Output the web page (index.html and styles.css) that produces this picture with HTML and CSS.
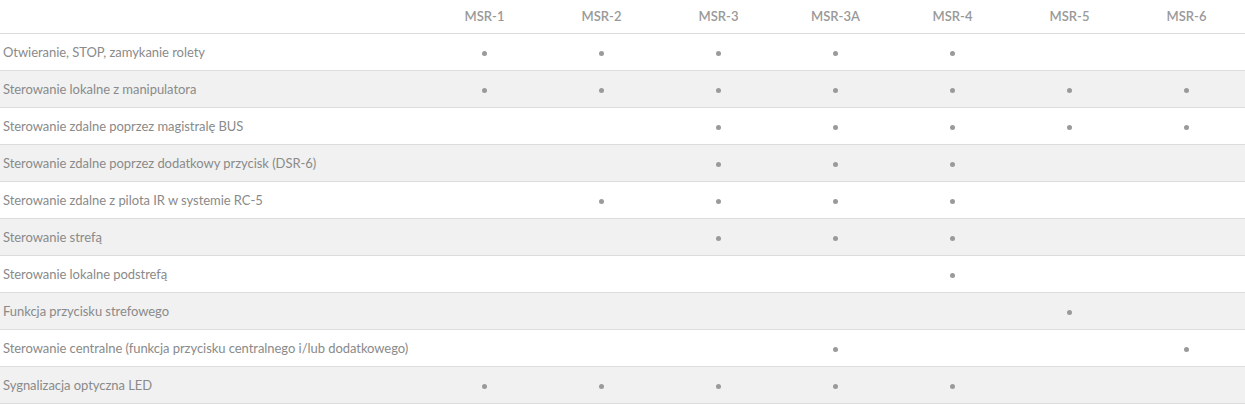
FILE: index.html
```html
<!DOCTYPE html>
<html lang="pl">
<head>
<meta charset="utf-8">
<link rel="stylesheet" href="styles.css">
</head>
<body>
<table class="cmp">
  <colgroup>
    <col class="c-name">
    <col class="c-m"><col class="c-m"><col class="c-m"><col class="c-m"><col class="c-m"><col class="c-m"><col class="c-m">
  </colgroup>
  <thead>
    <tr><th></th><th>MSR-1</th><th>MSR-2</th><th>MSR-3</th><th>MSR-3A</th><th>MSR-4</th><th>MSR-5</th><th>MSR-6</th></tr>
  </thead>
  <tbody>
    <tr><td>Otwieranie, STOP, zamykanie rolety</td><td><i class="dot"></i></td><td><i class="dot"></i></td><td><i class="dot"></i></td><td><i class="dot"></i></td><td><i class="dot"></i></td><td></td><td></td></tr>
    <tr><td>Sterowanie lokalne z manipulatora</td><td><i class="dot"></i></td><td><i class="dot"></i></td><td><i class="dot"></i></td><td><i class="dot"></i></td><td><i class="dot"></i></td><td><i class="dot"></i></td><td><i class="dot"></i></td></tr>
    <tr><td>Sterowanie zdalne poprzez magistralę BUS</td><td></td><td></td><td><i class="dot"></i></td><td><i class="dot"></i></td><td><i class="dot"></i></td><td><i class="dot"></i></td><td><i class="dot"></i></td></tr>
    <tr><td>Sterowanie zdalne poprzez dodatkowy przycisk (DSR-6)</td><td></td><td></td><td><i class="dot"></i></td><td><i class="dot"></i></td><td><i class="dot"></i></td><td></td><td></td></tr>
    <tr><td>Sterowanie zdalne z pilota IR w systemie RC-5</td><td></td><td><i class="dot"></i></td><td><i class="dot"></i></td><td><i class="dot"></i></td><td><i class="dot"></i></td><td></td><td></td></tr>
    <tr><td>Sterowanie strefą</td><td></td><td></td><td><i class="dot"></i></td><td><i class="dot"></i></td><td><i class="dot"></i></td><td></td><td></td></tr>
    <tr><td>Sterowanie lokalne podstrefą</td><td></td><td></td><td></td><td></td><td><i class="dot"></i></td><td></td><td></td></tr>
    <tr><td>Funkcja przycisku strefowego</td><td></td><td></td><td></td><td></td><td></td><td><i class="dot"></i></td><td></td></tr>
    <tr><td>Sterowanie centralne (funkcja przycisku centralnego i/lub dodatkowego)</td><td></td><td></td><td></td><td><i class="dot"></i></td><td></td><td></td><td><i class="dot"></i></td></tr>
    <tr><td>Sygnalizacja optyczna LED</td><td><i class="dot"></i></td><td><i class="dot"></i></td><td><i class="dot"></i></td><td><i class="dot"></i></td><td><i class="dot"></i></td><td></td><td></td></tr>
  </tbody>
</table>
</body>
</html>
```
FILE: styles.css
```css
html, body {
  margin: 0;
  padding: 0;
  background: #fff;
}
body {
  font-family: Lato, "Open Sans", sans-serif;
  font-size: 13px;
  color: #8a8a8a;
}
.cmp {
  width: 1245px;
  border-collapse: collapse;
  table-layout: fixed;
}
.c-name { width: 426px; }
.c-m { width: 117px; }
.cmp th {
  height: 33px;
  padding: 0;
  font-weight: 600;
  font-size: 13px;
  color: #999;
  text-align: center;
  vertical-align: middle;
  border-bottom: 1px solid #dcdcdc;
  box-sizing: border-box;
}
.cmp td {
  height: 36px;
  padding: 0;
  border-bottom: 1px solid #dcdcdc;
  vertical-align: middle;
  text-align: center;
  line-height: 16px;
}
.cmp td:first-child {
  text-align: left;
  padding-left: 3px;
  letter-spacing: -0.05px;
}
.cmp tbody tr:nth-child(even) td {
  background: #f1f1f1;
}
.dot {
  display: inline-block;
  width: 5px;
  height: 5px;
  border-radius: 50%;
  background: #9a9a9c;
  vertical-align: middle;
}
```
